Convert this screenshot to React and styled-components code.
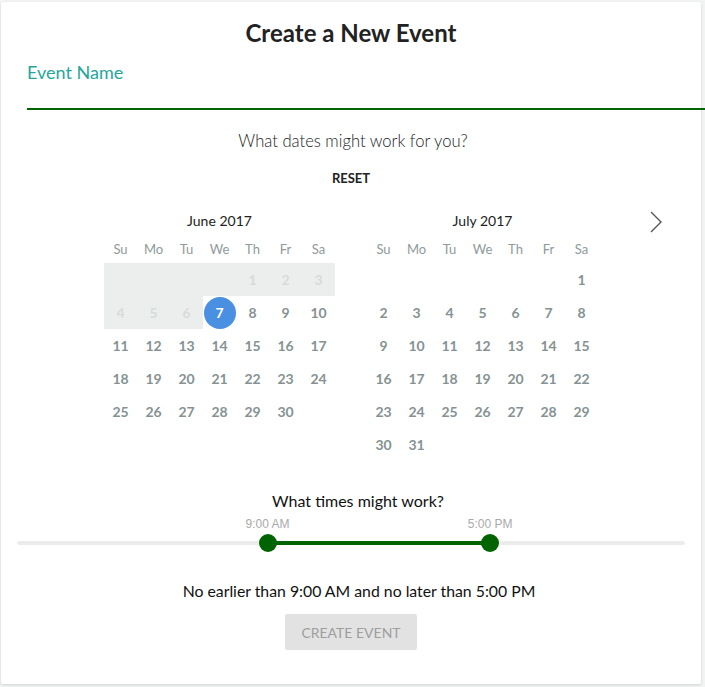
import styled, { createGlobalStyle } from "styled-components";

const GlobalStyle = createGlobalStyle`
  body {
    margin: 0;
    background: #f2f4f4;
    font-family: Lato, "Open Sans", sans-serif;
  }
`;

const june = { title: "June 2017", offset: 4, days: 30, disabledUntil: 6, selected: 7 };
const july = { title: "July 2017", offset: 6, days: 31, disabledUntil: 0, selected: null };
const weekdays = ["Su", "Mo", "Tu", "We", "Th", "Fr", "Sa"];

const start = 9;
const end = 17;

const Month = ({ month }) => {
  const cells = [];
  for (let i = 0; i < month.offset; i++) {
    cells.push(<Day key={"b" + i} $disabled={month.disabledUntil > 0} />);
  }
  for (let d = 1; d <= month.days; d++) {
    cells.push(
      <Day key={d} $disabled={d <= month.disabledUntil}>
        {d === month.selected ? <Selected>{d}</Selected> : d}
      </Day>
    );
  }
  return (
    <MonthBox>
      <MonthTitle>{month.title}</MonthTitle>
      <WeekRow>
        {weekdays.map((w) => (
          <span key={w}>{w}</span>
        ))}
      </WeekRow>
      <DayGrid>{cells}</DayGrid>
    </MonthBox>
  );
};

const fmt = (h) => {
  const suffix = h >= 12 ? "PM" : "AM";
  const hh = h % 12 === 0 ? 12 : h % 12;
  return `${hh}:00 ${suffix}`;
};

const App = () => {
  const a = (start / 24) * 100;
  const b = (end / 24) * 100;
  return (
    <>
      <GlobalStyle />
      <Card>
        <Title>Create a New Event</Title>
        <Field>
          <Label>Event Name</Label>
          <Input />
        </Field>
        <Question>What dates might work for you?</Question>
        <Reset>RESET</Reset>
        <Calendar>
          <Month month={june} />
          <Month month={july} />
          <NextButton>
            <svg width="14" height="24" viewBox="0 0 14 24">
              <path d="M2 2 L12 12 L2 22" fill="none" stroke="#555" strokeWidth="1.4" />
            </svg>
          </NextButton>
        </Calendar>
        <TimesTitle>What times might work?</TimesTitle>
        <Slider>
          <Labels>
            <TimeLabel style={{ left: a + "%" }}>{fmt(start)}</TimeLabel>
            <TimeLabel style={{ left: b + "%" }}>{fmt(end)}</TimeLabel>
          </Labels>
          <Track>
            <Range style={{ left: a + "%", width: b - a + "%" }} />
            <Handle style={{ left: a + "%" }} />
            <Handle style={{ left: b + "%" }} />
          </Track>
        </Slider>
        <Summary>
          No earlier than {fmt(start)} and no later than {fmt(end)}
        </Summary>
        <ButtonRow>
          <CreateButton disabled>CREATE EVENT</CreateButton>
        </ButtonRow>
      </Card>
    </>
  );
};
export default App;

const Card = styled.div`
  box-sizing: border-box;
  margin: 2px 4px 3px 1px;
  width: 700px;
  height: 682px;
  background: #fff;
  border-radius: 2px;
  box-shadow: 0 1px 3px rgba(0, 0, 0, 0.14);
  padding-top: 16px;
  color: #222;
`;

const Title = styled.h1`
  margin: 0;
  text-align: center;
  font-size: 24px;
  line-height: 30px;
  font-weight: 700;
  color: #222;
`;

const Field = styled.div`
  margin: 13px -4px 0 26px;
`;

const Label = styled.div`
  font-size: 18px;
  line-height: 22px;
  color: #26a69a;
`;

const Input = styled.div`
  height: 25px;
  border-bottom: 2px solid #006400;
`;

const Question = styled.div`
  margin-top: 20px;
  padding-left: 4px;
  text-align: center;
  font-size: 16.6px;
  line-height: 22px;
  font-weight: 300;
  color: #222;
`;

const Reset = styled.div`
  margin-top: 18px;
  text-align: center;
  font-size: 13px;
  line-height: 16px;
  font-weight: 700;
  color: #222;
`;

const Calendar = styled.div`
  position: relative;
  margin-top: 26px;
  display: flex;
  justify-content: center;
  gap: 32px;
`;

const MonthBox = styled.div`
  width: 231px;
`;

const MonthTitle = styled.div`
  text-align: center;
  font-size: 14px;
  line-height: 18px;
  color: #222;
`;

const WeekRow = styled.div`
  margin-top: 10px;
  display: grid;
  grid-template-columns: repeat(7, 33px);
  font-size: 13px;
  line-height: 18px;
  color: #8f9a9a;
  text-align: center;
`;

const DayGrid = styled.div`
  margin-top: 5px;
  display: grid;
  grid-template-columns: repeat(7, 33px);
  grid-auto-rows: 33px;
`;

const Day = styled.div`
  display: flex;
  align-items: center;
  justify-content: center;
  font-size: 14px;
  font-weight: 700;
  color: ${(p) => (p.$disabled ? "#d6dbdb" : "#869292")};
  background: ${(p) => (p.$disabled ? "#eceeee" : "transparent")};
`;

const Selected = styled.span`
  width: 32px;
  height: 32px;
  border-radius: 50%;
  background: #4a90e2;
  color: #fff;
  display: flex;
  align-items: center;
  justify-content: center;
`;

const NextButton = styled.div`
  position: absolute;
  left: 648px;
  top: -2px;
  width: 14px;
  height: 24px;
`;

const TimesTitle = styled.div`
  margin-top: 30px;
  padding-left: 14px;
  text-align: center;
  font-size: 16px;
  line-height: 20px;
  color: #111;
`;

const Slider = styled.div`
  margin: 6px 16px 0;
`;

const Labels = styled.div`
  position: relative;
  height: 14px;
`;

const TimeLabel = styled.span`
  position: absolute;
  top: 0;
  transform: translateX(-50%);
  font-family: "Liberation Sans", Arial, sans-serif;
  font-size: 12px;
  line-height: 14px;
  color: #aaaaaa;
  white-space: nowrap;
`;

const Track = styled.div`
  position: relative;
  margin-top: 10px;
  height: 4px;
  border-radius: 2px;
  background: #ececec;
`;

const Range = styled.div`
  position: absolute;
  top: 0;
  height: 4px;
  background: #006400;
`;

const Handle = styled.div`
  position: absolute;
  top: 50%;
  width: 18px;
  height: 18px;
  border-radius: 50%;
  background: #006400;
  transform: translate(-50%, -50%);
`;

const Summary = styled.div`
  margin-top: 36px;
  padding-left: 16px;
  text-align: center;
  font-size: 15.8px;
  line-height: 20px;
  color: #111;
`;

const ButtonRow = styled.div`
  margin-top: 13px;
  display: flex;
  justify-content: center;
`;

const CreateButton = styled.button`
  width: 132px;
  height: 36px;
  border: none;
  border-radius: 2px;
  background: #e2e2e2;
  color: #9e9e9e;
  font-family: Lato, sans-serif;
  font-size: 14px;
  padding: 0;
`;
